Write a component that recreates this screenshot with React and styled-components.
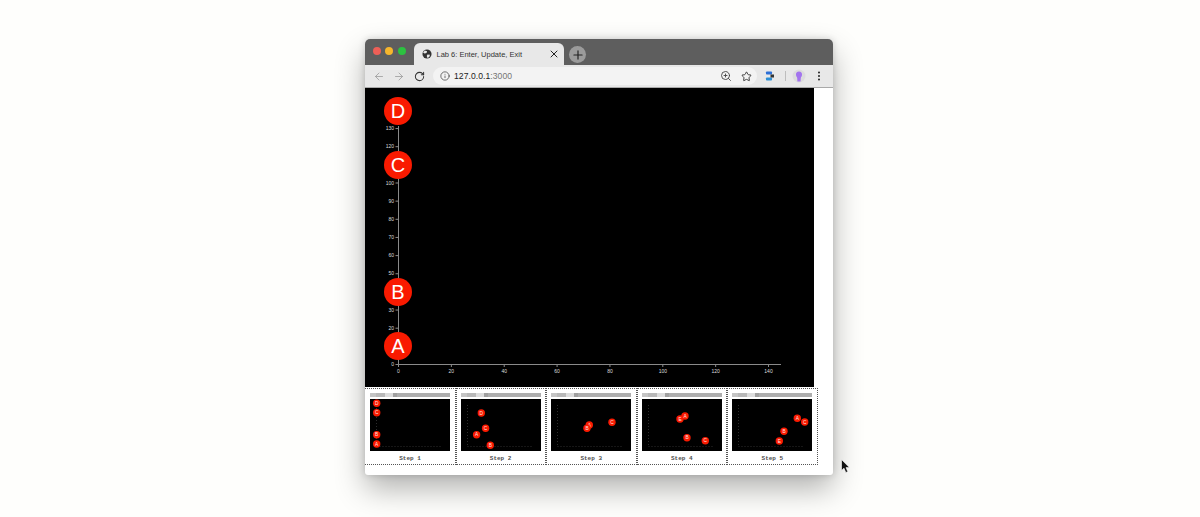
import React from 'react';
import styled, { createGlobalStyle } from 'styled-components';
import { ArrowLeft, ArrowRight, RotateCw, Info, Star, EllipsisVertical, Plus, X, ZoomIn } from 'lucide-react';

const GlobalStyle = createGlobalStyle`
  html, body {
    margin: 0;
    padding: 0;
    background: #fefefc;
  }
`;

const Page = styled.div`
  position: relative;
  width: 1200px;
  height: 517px;
  overflow: hidden;
  padding: 39px 0 0 365px;
  box-sizing: border-box;
  background: #fefefc;
  font-family: "Liberation Sans", Arial, sans-serif;
`;

const Window = styled.div`
  width: 468px;
  height: 436px;
  background: #fff;
  border-radius: 5px 5px 3px 3px;
  box-shadow: 0 14px 30px rgba(0, 0, 0, 0.3), 0 0 7px rgba(0, 0, 0, 0.16);
  overflow: hidden;
  display: flex;
  flex-direction: column;
`;

const TitleBar = styled.div`
  height: 26px;
  flex: none;
  background: #5e5e5e;
  display: flex;
  align-items: flex-end;
  box-sizing: border-box;
  padding-left: 8px;
`;

const Lights = styled.div`
  display: flex;
  gap: 4.4px;
  align-self: flex-start;
  margin-top: 8px;
  width: 41px;
`;

const Light = styled.span`
  width: 8px;
  height: 8px;
  border-radius: 50%;
  background: ${p => p.$color};
`;

const Tab = styled.div`
  width: 150px;
  height: 22px;
  background: #e8e8e8;
  border-radius: 6px 6px 0 0;
  display: flex;
  align-items: center;
  box-sizing: border-box;
  padding: 0 4px 0 8px;
  color: #333;
`;

const TabTitle = styled.span`
  flex: 1;
  margin-left: 4.5px;
  font-size: 7.5px;
  white-space: nowrap;
`;

const NewTab = styled.div`
  width: 17px;
  height: 17px;
  border-radius: 50%;
  background: #9b9b9b;
  color: #222;
  margin: 0 0 2px 5px;
  display: flex;
  align-items: center;
  justify-content: center;
`;

const Toolbar = styled.div`
  height: 23px;
  flex: none;
  background: #e8e8e8;
  border-bottom: 1px solid #a9a9a9;
  box-sizing: border-box;
  display: flex;
  align-items: center;
  padding-left: 8px;
`;

const NavButton = styled.div`
  width: 12px;
  height: 12px;
  flex: none;
  margin-left: ${p => p.$before ?? 0}px;
  margin-right: ${p => p.$gap ?? 8}px;
  color: ${p => p.$color || '#444'};
  display: flex;
  align-items: center;
  justify-content: center;
`;

const Omnibox = styled.div`
  width: 324px;
  height: 18px;
  flex: none;
  background: #f3f3f3;
  border-radius: 9px;
  display: flex;
  align-items: center;
  box-sizing: border-box;
  padding: 0 5px 0 7px;
  color: #444;
`;

const Url = styled.span`
  flex: 1;
  margin-left: 4px;
  font-size: 8.6px;
  letter-spacing: 0.05px;
  color: #757575;
  white-space: nowrap;
`;

const Host = styled.span`
  color: #222;
`;

const Separator = styled.span`
  width: 1px;
  height: 10px;
  background: #bdbdbd;
  margin: 0 6px 0 9px;
`;

const ChartFrame = styled.svg`
  display: block;
  flex: none;
  width: 449px;
  height: 299px;
  background: #000;
`;

const Strip = styled.div`
  display: flex;
  width: 453px;
  height: 77px;
  flex: none;
  margin-top: 1px;
`;

const Cell = styled.div`
  flex: 1;
  box-sizing: border-box;
  border: 1px dotted #555;
  padding: 4px 4px 0;
  display: flex;
  flex-direction: column;
  &:first-child {
    border-left: none;
    padding-left: 5px;
  }
`;

const ThumbBar = styled.div`
  width: 80px;
  height: 4px;
  background: linear-gradient(90deg, #c4c4c4 0 6px, #b8b8b8 6px 15px, #dcdcdc 15px 23px, #a0a0a0 23px 27px, #aeaeae 27px);
  margin-bottom: 2px;
`;

const Thumb = styled.svg`
  display: block;
  width: 80px;
  height: 52px;
  background: #000;
`;

const Caption = styled.div`
  font-family: "Liberation Mono", monospace;
  font-size: 6px;
  font-weight: 700;
  color: #444;
  opacity: 0.95;
  text-align: center;
  margin-top: 4px;
  width: 80px;
`;

const Pointer = styled.svg`
  position: absolute;
  left: 841px;
  top: 459px;
`;

const xTicks = [0, 20, 40, 60, 80, 100, 120, 140];
// 10, 40 and 110 sit under the big circles
const yTicks = [0, 20, 30, 50, 60, 70, 80, 90, 100, 120, 130];

const bigMarks = [
  { label: 'D', y: 23 },
  { label: 'C', y: 77 },
  { label: 'B', y: 204 },
  { label: 'A', y: 258 },
];

const steps = [
  { name: 'Step 1', marks: [['D', 6.7, 4.3], ['C', 6.7, 13.7], ['B', 6.7, 35.7], ['A', 6.7, 45]] },
  { name: 'Step 2', marks: [['D', 20.3, 14], ['C', 24.6, 29.3], ['A', 15.6, 35.7], ['B', 29.3, 46.3]] },
  { name: 'Step 3', marks: [['A', 38.3, 26], ['B', 36, 29.3], ['C', 61, 23.3]] },
  { name: 'Step 4', marks: [['E', 38, 20], ['A', 43, 17], ['B', 45, 38.7], ['C', 63.3, 41.7]] },
  { name: 'Step 5', marks: [['A', 65.3, 19.3], ['C', 72.7, 23], ['B', 52, 32.3], ['E', 47.3, 42]] },
];

function Chart() {
  return (
    <ChartFrame viewBox="0 0 449 299">
      <g stroke="#8a8a8a" strokeWidth="1">
        <line x1="33.5" y1="38" x2="33.5" y2="276.5" />
        <line x1="33.5" y1="276.5" x2="416" y2="276.5" />
        {xTicks.map(t => <line key={t} x1={33.5 + t * 2.643} y1="276" x2={33.5 + t * 2.643} y2="279" />)}
        {yTicks.map(t => <line key={t} x1="30.5" y1={276.5 - t * 1.815} x2="33.5" y2={276.5 - t * 1.815} />)}
      </g>
      <g fill="#ddd" fontSize="5" fontFamily="Liberation Sans, Arial, sans-serif">
        {xTicks.map(t => <text key={t} x={33.5 + t * 2.643} y="284.5" textAnchor="middle">{t}</text>)}
        {yTicks.map(t => <text key={t} x="29" y={278.2 - t * 1.815} textAnchor="end">{t}</text>)}
      </g>
      {bigMarks.map(m => (
        <g key={m.label}>
          <circle cx="33" cy={m.y} r="14" fill="#f91a00" />
          <text x="33" y={m.y + 7.2} textAnchor="middle" fill="#fff" fontSize="20" fontFamily="Liberation Sans, Arial, sans-serif">{m.label}</text>
        </g>
      ))}
    </ChartFrame>
  );
}

function StepCell({ step }) {
  return (
    <Cell>
      <ThumbBar />
      <Thumb viewBox="0 0 80 52">
        <g stroke="#2c2c2c" strokeWidth="1" strokeDasharray="1 2">
          <line x1="6.5" y1="6" x2="6.5" y2="47.5" />
          <line x1="6.5" y1="47.5" x2="72" y2="47.5" />
        </g>
        {step.marks.map(([label, x, y]) => (
          <g key={label}>
            <circle cx={x} cy={y} r="3.7" fill="#f91a00" />
            <text x={x} y={y + 1.7} textAnchor="middle" fill="#ffe4e0" fontSize="4.8" fontFamily="Liberation Sans, Arial, sans-serif">{label}</text>
          </g>
        ))}
      </Thumb>
      <Caption>{step.name}</Caption>
    </Cell>
  );
}

export default function App() {
  return (
    <Page>
      <GlobalStyle />
      <Window>
        <TitleBar>
          <Lights>
            <Light $color="#ee5f57" />
            <Light $color="#f6b62c" />
            <Light $color="#2cc240" />
          </Lights>
          <Tab>
            <svg width="10" height="10" viewBox="0 0 11 11">
              <circle cx="5.5" cy="5.5" r="5" fill="#333" />
              <path d="M3 1.6 5.6 2.6 5 4.4 3 5 1.2 4ZM6 6 8.8 6.4 8 8.8 6 10 5.2 7.6Z" fill="#e8e8e8" />
            </svg>
            <TabTitle>Lab 6: Enter, Update, Exit</TabTitle>
            <X size={12} strokeWidth={2} color="#222" />
          </Tab>
          <NewTab><Plus size={14} strokeWidth={2} /></NewTab>
        </TitleBar>
        <Toolbar>
          <NavButton $color="#9a9a9a"><ArrowLeft size={13} strokeWidth={1.6} /></NavButton>
          <NavButton $color="#9a9a9a"><ArrowRight size={13} strokeWidth={1.6} /></NavButton>
          <NavButton><RotateCw size={11} strokeWidth={2.2} color="#333" /></NavButton>
          <Omnibox>
            <Info size={10} strokeWidth={1.8} />
            <Url><Host>127.0.0.1</Host>:3000</Url>
            <NavButton><ZoomIn size={12} strokeWidth={1.8} /></NavButton>
            <NavButton $gap={0}><Star size={11} strokeWidth={2} color="#333" /></NavButton>
          </Omnibox>
          <NavButton $before={7} $gap={0}>
            <svg width="10" height="10" viewBox="0 0 10 10">
              <rect x="1" y="0.5" width="6" height="3" rx="0.8" fill="#2c6fd6" />
              <rect x="1" y="6.5" width="6" height="3" rx="0.8" fill="#2c8fd6" />
              <rect x="5.5" y="3.5" width="3.5" height="3" fill="#333" />
            </svg>
          </NavButton>
          <Separator />
          <svg width="14" height="14" viewBox="0 0 14 14">
            <circle cx="7" cy="7" r="6.5" fill="#dcdcdc" />
            <path d="M7 2.5C9 2.5 10.3 4 10 6 9.8 7.4 9 8 8.8 9L8.6 12.5H5.4L5.2 9C5 8 4.2 7.4 4 6 3.7 4 5 2.5 7 2.5Z" fill="#a374ee" />
          </svg>
          <NavButton $before={7} $gap={0}><EllipsisVertical size={12} strokeWidth={2.4} color="#333" /></NavButton>
        </Toolbar>
        <Chart />
        <Strip>
          {steps.map(s => <StepCell key={s.name} step={s} />)}
        </Strip>
      </Window>
      <Pointer width="11" height="15" viewBox="0 0 11 15">
        <path d="M0.5 0.5V11.5L3 9.2 4.8 13.5 6.8 12.7 5 8.6H8.4Z" fill="#111" stroke="#fff" strokeWidth="0.6" />
      </Pointer>
    </Page>
  );
}
